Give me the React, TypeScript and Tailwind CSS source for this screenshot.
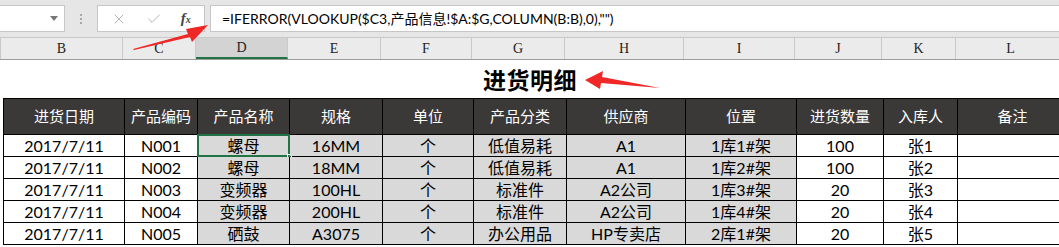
import { X, Check } from 'lucide-react'

const cols = [
  { key: 'B', w: 122 },
  { key: 'C', w: 73 },
  { key: 'D', w: 92 },
  { key: 'E', w: 93 },
  { key: 'F', w: 91 },
  { key: 'G', w: 93 },
  { key: 'H', w: 119 },
  { key: 'I', w: 111 },
  { key: 'J', w: 87 },
  { key: 'K', w: 74 },
  { key: 'L', w: 110 },
]

const heads = ['进货日期', '产品编码', '产品名称', '规格', '单位', '产品分类', '供应商', '位置', '进货数量', '入库人', '备注']

const rows = [
  ['2017/7/11', 'N001', '螺母', '16MM', '个', '低值易耗', 'A1', '1库1#架', '100', '张1', ''],
  ['2017/7/11', 'N002', '螺母', '18MM', '个', '低值易耗', 'A1', '1库2#架', '100', '张2', ''],
  ['2017/7/11', 'N003', '变频器', '100HL', '个', '标准件', 'A2公司', '1库3#架', '20', '张3', ''],
  ['2017/7/11', 'N004', '变频器', '200HL', '个', '标准件', 'A2公司', '1库4#架', '20', '张4', ''],
  ['2017/7/11', 'N005', '硒鼓', 'A3075', '个', '办公用品', 'HP专卖店', '2库1#架', '20', '张5', ''],
]

// columns D..I carry the grey fill
const grey = [false, false, true, true, true, true, true, true, false, false, false]

const font = { fontFamily: 'Lato, "Noto Sans CJK SC", sans-serif' }

export default function App() {
  return (
    <div className="relative w-[1059px] h-[247px] overflow-hidden bg-white" style={font}>
      {/* Formula bar */}
      <div className="h-[38px] bg-[#e6e6e6] flex items-center border-b border-[#c8c8c8]">
        <div className="w-[65px] h-[27px] bg-white border border-[#c6c6c6] border-l-0 flex items-center justify-end pr-[6px]">
          <span className="w-0 h-0 border-l-[4px] border-r-[4px] border-t-[5px] border-l-transparent border-r-transparent border-t-[#777]" />
        </div>
        <div className="w-[32px] flex flex-col items-center gap-[2px]">
          <span className="w-[2px] h-[2px] bg-[#a8a8a8]" />
          <span className="w-[2px] h-[2px] bg-[#a8a8a8]" />
          <span className="w-[2px] h-[2px] bg-[#a8a8a8]" />
        </div>
        <div className="w-[108px] h-[27px] bg-white border border-[#c6c6c6] flex items-center justify-around px-1">
          <X className="w-[16px] h-[16px] text-[#b4b4b4]" strokeWidth={1.5} />
          <Check className="w-[16px] h-[16px] text-[#b4b4b4]" strokeWidth={1.5} />
          <span className="text-[#444] text-[15px] italic font-bold" style={{ fontFamily: '"Liberation Serif", serif' }}>
            f<span className="text-[10px]">x</span>
          </span>
        </div>
        <div className="ml-[5px] flex-1 h-[27px] bg-white border border-[#c6c6c6] border-r-0 flex items-center pl-[11px] text-[14px] text-black">
          =IFERROR(VLOOKUP($C3,产品信息!$A:$G,COLUMN(B:B),0),"")
        </div>
      </div>

      {/* Column letters */}
      <div className="flex h-[22px] bg-[#ebebeb] border-b border-[#9d9d9d]" style={{ fontFamily: '"Liberation Serif", serif' }}>
        <div className="w-[3px] border-r border-[#c9c9c9]" />
        {cols.map((c) => (
          <div
            key={c.key}
            style={{ width: c.w }}
            className={
              c.key === 'D'
                ? 'shrink-0 flex items-center justify-center text-[14px] text-[#222] bg-[#d3d3d3] border-b-2 border-[#217346] border-r border-r-[#c9c9c9]'
                : 'shrink-0 flex items-center justify-center text-[14px] text-[#222] border-r border-[#c9c9c9]'
            }
          >
            {c.key}
          </div>
        ))}
      </div>

      {/* Title row */}
      <div className="h-[38px] flex items-center pl-[483px]">
        <span className="text-[23px] font-bold text-black tracking-[0.5px]" style={{ fontFamily: '"Noto Sans CJK SC", sans-serif' }}>
          进货明细
        </span>
      </div>

      {/* Table */}
      <div className="flex flex-col pl-[3px]">
        <div className="flex h-[37px] bg-[#3b3838] border-y border-black">
          {heads.map((h, i) => (
            <div
              key={h}
              style={{ width: cols[i].w }}
              className="shrink-0 flex items-center justify-center text-white text-[15px] border-r border-black first:border-l"
            >
              {h}
            </div>
          ))}
        </div>
        {rows.map((r, ri) => (
          <div key={ri} className="flex h-[22px] border-b border-black">
            {r.map((v, i) => (
              <div
                key={i}
                style={{ width: cols[i].w }}
                className={
                  'relative shrink-0 flex items-center justify-center text-[16px] text-black border-r border-black first:border-l ' +
                  (grey[i] ? 'bg-[#d9d9d9]' : 'bg-white')
                }
              >
                {v}
                {ri === 0 && i === 2 && (
                  <>
                    <span className="absolute -left-[1px] -top-[1px] -right-[1px] -bottom-[1px] border-2 border-[#217346]" />
                    <span className="absolute -right-[3px] -bottom-[3px] w-[5px] h-[5px] bg-[#217346] border border-white" />
                  </>
                )}
              </div>
            ))}
          </div>
        ))}
      </div>

      {/* Red arrows pointing at the formula and the title */}
      <svg className="absolute left-0 top-0 pointer-events-none" width="1059" height="247">
        <polygon points="133,49 188,34 186,29 208,25 192,42 190,37 134,50" fill="#f02727" />
        <polygon points="585,80 603,71 602,77 660,88 601,83 600,89" fill="#f02727" />
      </svg>
    </div>
  )
}
